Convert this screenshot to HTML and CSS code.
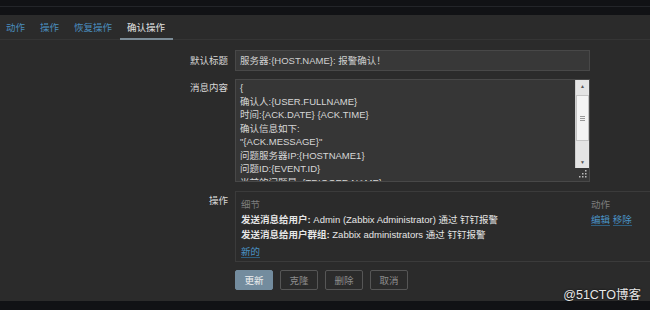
FILE: index.html
```html
<!DOCTYPE html>
<html lang="zh-CN">
<head>
  <meta charset="UTF-8">
  <title>确认操作</title>
  <link rel="stylesheet" href="styles.css">
</head>
<body>
  <div class="topbar"><div class="topbar-line"></div></div>

  <nav class="tabs">
    <a class="tab">动作</a>
    <a class="tab">操作</a>
    <a class="tab">恢复操作</a>
    <a class="tab active">确认操作</a>
  </nav>

  <main class="page">
    <form class="form">
      <label class="form-label label-mid">默认标题</label>
      <div class="text-input">服务器:{HOST.NAME}: 报警确认！</div>

      <label class="form-label label-top">消息内容</label>
      <div class="textarea">
        <div class="ta-text">
          <div>{</div>
          <div>确认人:{USER.FULLNAME}</div>
          <div>时间:{ACK.DATE} {ACK.TIME}</div>
          <div>确认信息如下:</div>
          <div>"{ACK.MESSAGE}"</div>
          <div>问题服务器IP:{HOSTNAME1}</div>
          <div>问题ID:{EVENT.ID}</div>
          <div>当前的问题是: {TRIGGER.NAME}</div>
        </div>
        <div class="ta-side">
          <div class="scrollbar">
            <div class="sb-btn sb-up">&#9650;</div>
            <div class="sb-thumb"><span></span><span></span><span></span></div>
            <div class="sb-track"></div>
            <div class="sb-btn sb-down">&#9660;</div>
          </div>
          <div class="grip">
            <svg width="8" height="8" viewBox="0 0 8 8">
              <rect x="6" y="0" width="1.5" height="1.5" fill="#bbb"/>
              <rect x="3" y="3" width="1.5" height="1.5" fill="#bbb"/>
              <rect x="6" y="3" width="1.5" height="1.5" fill="#bbb"/>
              <rect x="0" y="6" width="1.5" height="1.5" fill="#bbb"/>
              <rect x="3" y="6" width="1.5" height="1.5" fill="#bbb"/>
              <rect x="6" y="6" width="1.5" height="1.5" fill="#bbb"/>
            </svg>
          </div>
        </div>
      </div>

      <label class="form-label label-ops">操作</label>
      <div class="ops">
        <div class="ops-head">细节</div>
        <div class="ops-head">动作</div>

        <div class="ops-row"><b>发送消息给用户:</b> Admin (Zabbix Administrator) 通过 钉钉报警</div>
        <div class="ops-actions"><a class="link">编辑</a> <a class="link">移除</a></div>

        <div class="ops-row"><b>发送消息给用户群组:</b> Zabbix administrators 通过 钉钉报警</div>
        <div></div>

        <div class="ops-new"><a class="link">新的</a></div>
      </div>

      <div></div>
      <div class="buttons">
        <button type="button" class="btn btn-main">更新</button>
        <button type="button" class="btn">克隆</button>
        <button type="button" class="btn">删除</button>
        <button type="button" class="btn">取消</button>
      </div>
    </form>
  </main>

  <div class="bottombar"></div>
  <div class="watermark">@51CTO博客</div>
</body>
</html>
```

FILE: styles.css
```css
html, body {
  margin: 0;
  padding: 0;
  height: 310px;
  overflow: hidden;
}

body {
  position: relative;
  display: flex;
  flex-direction: column;
  background-color: #2b2b2b;
  color: #d4d4d4;
  font-family: 'Liberation Sans', 'Noto Sans CJK SC', sans-serif;
  font-size: 9.5px;
}

.topbar {
  height: 15px;
  background-color: #111215;
}

.topbar-line {
  height: 6px;
  border-bottom: 1px solid #232529;
}

.tabs {
  display: flex;
  height: 24px;
  border-bottom: 1px solid #353535;
}

.tab {
  display: flex;
  align-items: center;
  padding: 0 7.5px;
  color: #4a8bbd;
  border-bottom: 2px solid transparent;
  margin-bottom: -1px;
}

.tab:first-child {
  padding-left: 6px;
}

.tab.active {
  color: #e2e2e2;
  border-bottom-color: #7b8b96;
}

.page {
  flex: 1;
}

.form {
  display: grid;
  grid-template-columns: 228px 1fr;
  column-gap: 7px;
  padding-top: 10px;
}

.form-label {
  text-align: right;
  color: #d8d8d8;
}

.label-mid {
  line-height: 21px;
}

.label-top {
  margin-top: 8px;
  padding-top: 2px;
  line-height: 13.5px;
}

.label-ops {
  margin-top: 10px;
  padding-top: 2px;
  line-height: 14px;
}

.text-input {
  width: 345px;
  height: 19px;
  line-height: 19px;
  padding: 0 4px;
  background-color: #383838;
  border: 1px solid #484848;
  color: #d0d0d0;
}

.textarea {
  display: flex;
  width: 355px;
  height: 103px;
  margin-top: 8px;
  background-color: #363636;
  border: 1px solid #484848;
  box-sizing: border-box;
  overflow: hidden;
}

.ta-text {
  flex: 1;
  padding: 1px 4px;
  line-height: 13.5px;
  color: #d6d6d6;
  overflow: hidden;
  white-space: nowrap;
}

.ta-side {
  width: 14px;
  display: flex;
  flex-direction: column;
}

.scrollbar {
  height: 88px;
  display: flex;
  flex-direction: column;
  background-color: #e4e4e4;
  border-left: 1px solid #cfcfcf;
}

.sb-btn {
  font-size: 5px;
  color: #555;
  text-align: center;
}

.sb-up {
  height: 15px;
  line-height: 12px;
}

.sb-down {
  height: 12px;
  line-height: 12px;
}

.sb-thumb {
  height: 46px;
  background-color: #f4f4f4;
  border: 1px solid #c4c4c4;
  box-sizing: border-box;
  display: flex;
  flex-direction: column;
  align-items: center;
  justify-content: center;
  gap: 1px;
}

.sb-thumb span {
  width: 5px;
  height: 1px;
  background-color: #999;
}

.sb-track {
  flex: 1;
}

.grip {
  flex: 1;
  display: flex;
  align-items: flex-end;
  justify-content: flex-end;
  padding: 0 2px 3px 0;
}

.ops {
  display: grid;
  grid-template-columns: 350px 1fr;
  width: 420px;
  margin-top: 9px;
  padding: 6px 5px 2px;
  border: 1px solid #3b3b3b;
  line-height: 15px;
  color: #e6e6e6;
}

.ops b {
  font-weight: bold;
}

.ops-head {
  color: #7d7d7d;
  line-height: 14px;
}

.ops-row {
  white-space: nowrap;
}

.ops-new {
  grid-column: 1 / 3;
  margin-top: 2px;
}

.link {
  color: #4a93c6;
  border-bottom: 1px solid #2f5f80;
}

.buttons {
  display: flex;
  gap: 7px;
  margin-top: 8px;
}

.btn {
  width: 38px;
  height: 20px;
  padding: 0;
  background: transparent;
  border: 1px solid #565656;
  border-radius: 2px;
  color: #8d8d8d;
  font-family: inherit;
  font-size: 9.5px;
}

.btn.btn-main {
  background-color: #738c9e;
  border-color: #738c9e;
  color: #f0f0f0;
}

.bottombar {
  height: 9px;
  background-color: #111215;
}

.watermark {
  position: absolute;
  right: 9px;
  bottom: 7px;
  font-size: 12.5px;
  color: #e8e8e8;
  text-shadow: 0 0 2px #000;
}
```
